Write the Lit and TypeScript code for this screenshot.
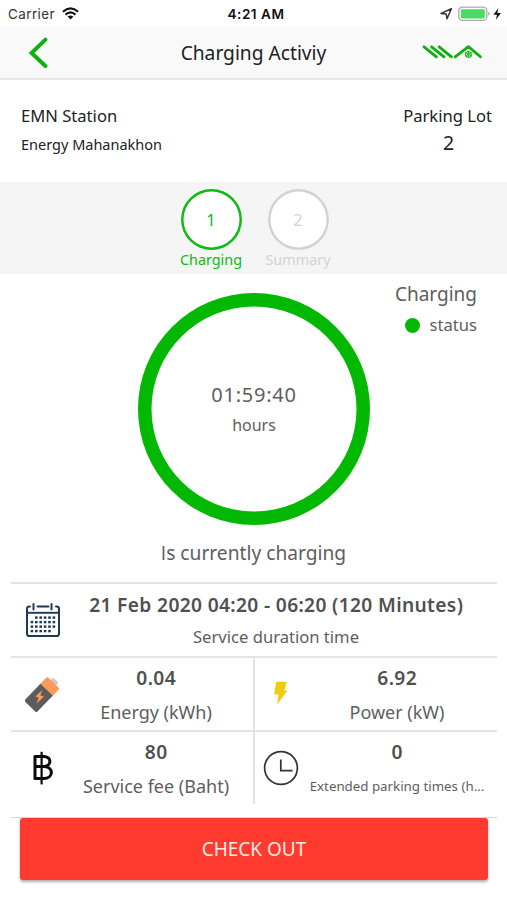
import { LitElement, html, css, svg } from "lit";
import { customElement, property } from "lit/decorators.js";

const calendarDots = [
  [1, 2, 3, 4, 5],
  [0, 1, 2, 3, 4, 5],
  [0, 1, 2, 3, 4, 5],
  [0, 1, 2, 3, 4],
];

const calendarIcon = html`<svg width="34" height="34" viewBox="0 0 34 34" fill="none" stroke="#1c3a57">
  <path d="M4 3.6H3.4Q1 3.6 1 6V30.4Q1 33 3.6 33H30.4Q33 33 33 30.4V6Q33 3.6 30.6 3.6H30M11.5 3.6H22.5" stroke-width="2" stroke-linecap="round"/>
  <path d="M7.5 1V6.5M25.5 1V6.5" stroke-width="2" stroke-linecap="round"/>
  <path d="M1 9.8H33" stroke-width="1.9"/>
  ${calendarDots.map((row, r) => row.map((c) => svg`<rect x=${4.6 + c * 4.4} y=${13.4 + r * 4.5} width="2.6" height="2.4" fill="#1c3a57" stroke="none"/>`))}
</svg>`;

const batteryIcon = html`<svg width="36" height="36" viewBox="0 0 36 36">
  <g transform="translate(15.6 20) rotate(44)">
    <rect x="-3.8" y="-22" width="7.6" height="6" rx="1.4" fill="#c9cbce"/>
    <path d="M-8.6 -7V-16.9Q-8.6 -18.6 -6.9 -18.6H6.9Q8.6 -18.6 8.6 -16.9V-7Z" fill="#fd9a57"/>
    <path d="M-8.6 -8.6H8.6V13.4Q8.6 14.8 7.2 14.8H-7.2Q-8.6 14.8 -8.6 13.4Z" fill="#5c5c5e"/>
  </g>
  <path d="M17 14.2L10.4 20.6L13.6 21.6L11.6 27.6L19 20.4L15.4 19.4Z" fill="#fd9a57"/>
</svg>`;

const boltIcon = html`<svg width="14" height="24" viewBox="0 0 14 24">
  <path d="M2.2 .8H13L10.2 9.4H13.6L3 23.4L4.6 13.4H.2Z" fill="#efcc0c"/>
</svg>`;

const bahtIcon = html`<svg width="22" height="36" viewBox="0 0 22 36" fill="none" stroke="#0a0a0a">
  <path d="M3 6.4H11.5C20 6.4 20 16.4 11.5 16.6H3M11.5 16.6C22 16.6 22 28.6 11.5 28.6H3M3 5.2V29.8" stroke-width="3"/>
  <path d="M9.6 1.8V34.4" stroke-width="2.2"/>
</svg>`;

const clockIcon = html`<svg width="36" height="36" viewBox="0 0 36 36" fill="none" stroke="#333">
  <circle cx="18" cy="18" r="16.4" stroke-width="1.7"/>
  <path d="M17.8 9.4V20.6H29.6" stroke-width="1.7"/>
</svg>`;

@customElement("step-badge")
class StepBadge extends LitElement {
  @property({ type: Number }) number = 1;
  @property() label = "";
  @property({ type: Boolean, reflect: true }) active = false;

  static styles = css`
    :host { display: flex; flex-direction: column; align-items: center; width: 87px; color: #d3d3d3; }
    :host([active]) { color: #0fba12; }
    .disc {
      width: 61px; height: 61px; border-radius: 50%;
      box-shadow: inset 0 0 0 2.5px currentColor; background: #fff;
      display: flex; align-items: center; justify-content: center;
      font-size: 16.4px; line-height: 20px;
    }
    .name { font-size: 14.4px; line-height: 20px; white-space: nowrap; }
  `;

  render() {
    return html`<div class="disc">${this.number}</div><div class="name">${this.label}</div>`;
  }
}

@customElement("metric-cell")
class MetricCell extends LitElement {
  @property() value = "";
  @property() label = "";

  static styles = css`
    :host { display: grid; grid-template-columns: 62px minmax(0, 1fr); box-sizing: border-box; min-width: 0; }
    .icon { display: flex; justify-content: center; align-items: flex-start; padding-top: var(--icon-top, 20px); }
    .texts { min-width: 0; text-align: center; padding-top: var(--text-top, 6px); margin: 0 var(--text-right, 0) 0 var(--text-left, 0); }
    .value { font-size: 19.2px; font-weight: 600; color: #505050; line-height: 28px; letter-spacing: .35px; margin-right: -.35px; white-space: nowrap; }
    .label {
      font-size: var(--label-size, 18px); color: #5e5e5e; line-height: 28px; margin-top: var(--label-gap, 6px);
      overflow: hidden; text-overflow: ellipsis; white-space: nowrap;
    }
  `;

  render() {
    return html`
      <div class="icon"><slot></slot></div>
      <div class="texts"><div class="value">${this.value}</div><div class="label">${this.label}</div></div>
    `;
  }
}

@customElement("app-root")
class AppRoot extends LitElement {
  static styles = css`
    :host {
      display: flex; flex-direction: column; width: 507px; height: 900px; overflow: hidden;
      background: #fff; font-family: "Noto Sans", "Open Sans", sans-serif; color: #222;
    }
    svg { display: block; flex: none; }
    .status-bar {
      display: grid; grid-template-columns: 1fr auto 1fr; align-items: center; height: 26px; padding: 1px 5px 0 8px;
      box-sizing: border-box; font-family: Inter, sans-serif; font-size: 13.4px; color: #333;
    }
    .carrier { display: flex; align-items: center; gap: 7px; letter-spacing: .45px; }
    .clock { font-weight: 600; font-size: 13.6px; letter-spacing: .5px; color: #111; padding-left: 2px; }
    .indicators { display: flex; align-items: center; justify-content: flex-end; }
    .nav {
      display: grid; grid-template-columns: 100px 1fr 100px; align-items: center; height: 54px; box-sizing: border-box;
      background: #f9f9f9; border-bottom: 2px solid #e6e6e6;
    }
    .back { padding-left: 28px; }
    .title { text-align: center; font-size: 19.2px; line-height: 30px; padding-top: 2px; }
    .brand { justify-self: end; padding-right: 25px; }
    .station { display: flex; justify-content: space-between; height: 102px; padding: 24px 15px 0 21px; }
    .station, .steps { box-sizing: border-box; }
    .name { font-size: 16.6px; line-height: 24px; }
    .place { font-size: 14.5px; line-height: 24px; margin-top: 4px; }
    .lot { text-align: center; }
    .lot-number { font-size: 19.5px; line-height: 28px; padding: 1px 0 0 2px; }
    .steps { display: flex; justify-content: center; height: 92px; padding: 7px 0 0 2px; background: #f5f5f5; }
    .gauge-area { display: grid; grid-template-columns: 137px 1fr 137px; height: 262px; color: #5e5e5e; }
    .gauge {
      grid-column: 2; justify-self: center; margin: 19px 0 0 1px; width: 232px; height: 232px;
      box-shadow: inset 0 0 0 13.5px #03b803; border-radius: 50%;
      display: flex; flex-direction: column; align-items: center; justify-content: center;
    }
    .time { font-size: 20px; line-height: 30px; letter-spacing: .75px; margin-top: 1px; }
    .unit { font-size: 16px; line-height: 30px; }
    .legend { padding: 5px 30px 0 0; display: flex; flex-direction: column; align-items: flex-end; }
    .legend-title { font-size: 19px; line-height: 30px; }
    .legend-row { display: flex; align-items: center; gap: 10px; font-size: 16.6px; line-height: 32px; }
    .dot { width: 15px; height: 15px; border-radius: 50%; background: #03b803; }
    .state { height: 46px; text-align: center; font-size: 19.2px; line-height: 34px; color: #5e5e5e; }
    .bar-i { font-family: "Open Sans", sans-serif; }
    .details {
      display: grid; grid-template: 74px 74px 86px / 242px 244px; margin: 0 10px 0 11px;
      border-top: 2px solid #e2e2e2; border-bottom: 1px solid #d9d9d9; box-sizing: border-box; height: 236px;
    }
    .wide {
      grid-column: 1 / 3; border-bottom: 2px solid #e4e4e4;
      --icon-top: 19px; --text-left: -16px; --text-right: 2px; --label-size: 16.6px; --label-gap: 4px; --text-top: 7px;
    }
    .wide svg, .left svg { margin-left: 2px; }
    .line { border-bottom: 2px solid #e4e4e4; }
    .left { --icon-top: 18px; --text-right: 14px; }
    .right { border-left: 2px solid #e4e4e4; --icon-top: 23px; --text-left: -8px; --text-right: 12px; }
    .right svg { margin-right: 10px; }
    .short { height: 72px; }
    .small { --icon-top: 18px; --label-size: 13.3px; }
    .action {
      margin: 0 19px 0 20px; height: 61.5px; border: 0; border-radius: 3px; background: #ff3b30; color: #ffe9e6;
      font: 400 19px/28px "Noto Sans", sans-serif; box-shadow: 0 2px 3px rgba(0, 0, 0, .32);
    }
  `;

  render() {
    return html`
      <div class="status-bar">
        <div class="carrier">
          <span>Carrier</span>
          <svg width="17" height="13" viewBox="0 0 17 13" fill="none" stroke="#111" stroke-width="2.1">
            <path d="M.9 4.8Q8.5 -2 16.1 4.8M3.5 7.6Q8.5 3.2 13.5 7.6"/>
            <path d="M5.6 9.6Q8.5 7.2 11.4 9.6L8.5 12.6Z" fill="#111" stroke="none"/>
          </svg>
        </div>
        <div class="clock">4:21 AM</div>
        <div class="indicators">
          <svg width="62" height="16" viewBox="0 0 62 16">
            <path d="M1 7.4L11.4 2.8L7 12.8L6.2 8Z" fill="none" stroke="#333" stroke-width="1.5" stroke-linejoin="round"/>
            <rect x="18.8" y="1.2" width="28" height="13.2" rx="3.6" fill="#fff" stroke="#aaa" stroke-width="1.3"/>
            <rect x="20.8" y="3.2" width="24" height="9.2" rx="1.4" fill="#4cd964"/>
            <path d="M48.3 5.8Q51.2 7.8 48.3 9.8Z" fill="#999"/>
            <path d="M58.4 2L53.4 8.8H57L55.8 13.8L61 7H57.3Z" fill="#111"/>
          </svg>
        </div>
      </div>

      <div class="nav">
        <div class="back">
          <svg width="22" height="32" viewBox="0 0 22 32" fill="none" stroke="#10b010" stroke-width="4" stroke-linecap="round" stroke-linejoin="miter">
            <path d="M17.4 3.6L3.6 17L17.4 30"/>
          </svg>
        </div>
        <div class="title">Charging Activiy</div>
        <div class="brand">
          <svg width="60" height="16" viewBox="0 0 60 16" fill="none" stroke="#10b010" stroke-width="2.8" stroke-linecap="round">
            <path d="M2 2.8L14.4 12.8M9.6 2.8L22 12.8M17.2 2.8L29.4 12.8M33.2 12.8L46.4 2.6L58.4 12.8" stroke-linejoin="round"/>
            <path d="M46.4 7.4V13.4M43.8 8.9L49 11.9M43.8 11.9L49 8.9" stroke-width="1"/>
            <circle cx="46.4" cy="10.4" r="2.9" stroke-width="1.3" stroke-dasharray="1.7 1.3"/>
          </svg>
        </div>
      </div>

      <div class="station">
        <div>
          <div class="name">EMN Station</div>
          <div class="place">Energy Mahanakhon</div>
        </div>
        <div class="lot">
          <div class="name">Parking Lot</div>
          <div class="lot-number">2</div>
        </div>
      </div>

      <div class="steps">
        <step-badge number="1" label="Charging" active></step-badge>
        <step-badge number="2" label="Summary"></step-badge>
      </div>

      <div class="gauge-area">
        <div class="gauge">
          <div class="time">01:59:40</div>
          <div class="unit">hours</div>
        </div>
        <div class="legend">
          <div class="legend-title">Charging</div>
          <div class="legend-row"><span class="dot"></span><span>status</span></div>
        </div>
      </div>
      <div class="state"><span class="bar-i">I</span>s currently charging</div>

      <div class="details">
        <metric-cell class="wide" value="21 Feb 2020 04:20 - 06:20 (120 Minutes)" label="Service duration time">${calendarIcon}</metric-cell>
        <metric-cell class="left line" value="0.04" label="Energy (kWh)">${batteryIcon}</metric-cell>
        <metric-cell class="right line" value="6.92" label="Power (kW)">${boltIcon}</metric-cell>
        <metric-cell class="left" value="80" label="Service fee (Baht)">${bahtIcon}</metric-cell>
        <metric-cell class="right short small" value="0" label="Extended parking times (h...">${clockIcon}</metric-cell>
      </div>

      <button class="action">CHECK OUT</button>
    `;
  }
}
